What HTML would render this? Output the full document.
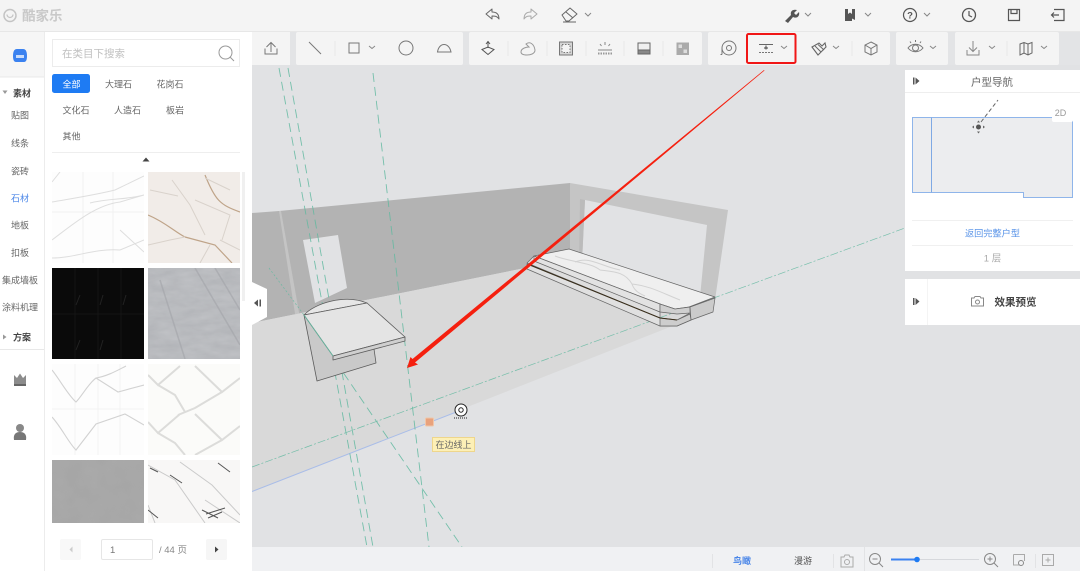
<!DOCTYPE html>
<html lang="zh"><head><meta charset="utf-8"><title>酷家乐</title>
<style>
html,body{margin:0;padding:0;width:1080px;height:571px;overflow:hidden;background:#e1e3e5}
svg{display:block;position:absolute;left:0;top:0;filter:blur(.35px)}
text{font-family:"Liberation Sans","Noto Sans CJK SC",sans-serif}
.i{fill:none;stroke:#777;stroke-width:1}
.c{fill:none;stroke:#888;stroke-width:1}
.m{font-size:9px;fill:#666;text-anchor:middle}
.t{font-size:9px;fill:#666;text-anchor:middle}
.s{stroke:#e8e8e8;stroke-width:1}
</style></head><body>
<svg width="1080" height="571" viewBox="0 0 1080 571" xmlns="http://www.w3.org/2000/svg">
<defs>
<filter id="n1" x="0" y="0" width="100%" height="100%"><feTurbulence type="fractalNoise" baseFrequency="0.05 0.14" numOctaves="3" seed="4"/><feColorMatrix values="0 0 0 0 .62  0 0 0 0 .63  0 0 0 0 .65  .9 0 0 0 -.1"/></filter>
<filter id="n2" x="0" y="0" width="100%" height="100%"><feTurbulence type="fractalNoise" baseFrequency="0.06" numOctaves="2" seed="9"/><feColorMatrix values="0 0 0 0 .55  0 0 0 0 .55  0 0 0 0 .55  .5 0 0 0 -.1"/></filter>
<clipPath id="c1"><rect x="52" y="172" width="92" height="91"/></clipPath>
<clipPath id="c2"><rect x="148" y="172" width="92" height="91"/></clipPath>
<clipPath id="c3"><rect x="52" y="268" width="92" height="91"/></clipPath>
<clipPath id="c4"><rect x="148" y="268" width="92" height="91"/></clipPath>
<clipPath id="c5"><rect x="52" y="364" width="92" height="91"/></clipPath>
<clipPath id="c6"><rect x="148" y="364" width="92" height="91"/></clipPath>
<clipPath id="c7"><rect x="52" y="460" width="92" height="63"/></clipPath>
<clipPath id="c8"><rect x="148" y="460" width="92" height="63"/></clipPath>
</defs>

<!-- viewport -->
<rect x="252" y="65" width="828" height="483" fill="#e1e2e4"/>
<!-- back wall -->
<polygon points="252,213 279,211 570,183 570,259 252,323" fill="#b3b3b3"/>
<polygon points="279,211 281,211 300,318 296,320" fill="#c4c4c4"/>
<polygon points="303,240 338,235 347,288 315,303" fill="#e1e2e4"/>
<!-- right wall -->
<polygon points="570,183 728,210 715,300 700,297 707,225 585,200 582,262 570,259" fill="#c5c5c5"/>
<polygon points="580,199 585,200 582,262 579,261" fill="#bbb"/>
<!-- floor -->
<polygon points="252,323 570,259 715,300 670,327 252,492" fill="#d9d9d9"/>
<line x1="252" y1="491.5" x2="455" y2="412.5" stroke="#a9bde8" stroke-width="1"/>

<!-- green guides -->
<g fill="none" stroke="#62b9a0" stroke-width=".9" opacity=".85">
<line x1="279" y1="68" x2="367" y2="547" stroke-dasharray="9 5"/>
<line x1="288" y1="68" x2="373" y2="547" stroke-dasharray="9 5"/>
<line x1="373" y1="73" x2="429" y2="547" stroke-dasharray="9 5"/>
<line x1="269" y1="268" x2="304" y2="315" stroke-dasharray="2 2" stroke-width=".7"/>
<line x1="304" y1="315" x2="462" y2="547" stroke-dasharray="9 5"/>
<line x1="252" y1="467" x2="905" y2="228" stroke-dasharray="8 2 2 2" stroke-width=".7"/>
</g>

<!-- left table -->
<g stroke="#5c5c5c" stroke-width=".8" stroke-linejoin="round">
<polygon points="304,315 317,381 376,363 374,349" fill="#c9c9c9"/>
<path d="M304,315C315,303 345,294 367,303Z" fill="#e6e6e6"/>
<polygon points="304,315 367,303 405,337 333,356" fill="#e4e4e4"/>
<polygon points="333,356 405,337 405,341 333,360" fill="#cfcfcf"/>
</g>
<line x1="304" y1="315" x2="333" y2="356" stroke="#62b9a0" stroke-width=".8"/>

<!-- counter -->
<g stroke="#666" stroke-width=".7" stroke-linejoin="round">
<polygon points="527,263 534,256 660,312 660,318" fill="#dedede"/>
<path d="M527,264L660,318L677,320L690,313L691,320L677,326L660,326L527,269Z" fill="#e0e0e0"/>
<path d="M534,256L569,249L715,297L689,307L675,309L660,304Z" fill="#efefef"/>
<path d="M534,256L660,304L660,312L534,261Z" fill="#e2e2e2"/>
<path d="M660,304L675,309L690,307L690,313L677,314L660,312Z" fill="#cfcfcf"/>
<polygon points="690,307 715,298 713,312 691,320" fill="#cbcbcb"/>
<path d="M660,318L677,320L690,314L691,320L677,326L660,326Z" fill="#cdcdcd"/>
</g>
<path d="M530,265L660,318L677,320" fill="none" stroke="#3a2f1c" stroke-width="1"/>
<g fill="none" stroke="#d2d2d2" stroke-width="1">
<path d="M555,256C570,262 590,262 600,270C615,272 625,272 632,284C650,286 660,292 680,300"/>
<path d="M575,262C590,256 600,266 620,270"/>
<path d="M632,284C634,290 638,293 645,296"/>
</g>

<!-- snap markers -->
<rect x="425.500" y="418" width="8" height="8" rx="1" fill="#e9a27c" stroke="#f0c6a8"/>
<g fill="#fff" stroke="#222" stroke-width="1"><circle cx="461" cy="410" r="6"/><circle cx="461" cy="410" r="2.200" fill="none"/></g>
<path d="M454,418H467" stroke="#222" stroke-dasharray="1 1"/>
<rect x="432.500" y="437.500" width="42" height="14" fill="#fdf0b6" stroke="#eed68c"/>
<text x="453.500" y="447.800" font-size="9" fill="#666" text-anchor="middle">在边线上</text>

<!-- red annotation arrow -->
<polygon points="764,70 764.500,70.500 415,362.500 418,364.500 407,368 410.500,357 412.500,359" fill="#f5200f"/>

<!-- toggle tab -->
<polygon points="252,282 267,289 267,317 252,325" fill="#fff"/>
<path d="M254,303L258,299.500V306.500Z" fill="#555"/><rect x="259.500" y="299.500" width="1.500" height="7" fill="#555"/>

<!-- top bar -->
<rect x="0" y="0" width="1080" height="31" fill="#f4f4f4"/>
<rect x="0" y="31" width="1080" height="1" fill="#e7e7e7"/>
<rect x="0" y="32" width="1080" height="33" fill="#e3e4e6"/>
<g fill="#f4f4f4">
<rect x="252" y="32" width="38" height="33"/>
<rect x="296" y="32" width="167" height="33" rx="2"/>
<rect x="469" y="32" width="233" height="33" rx="2"/>
<rect x="708" y="32" width="182" height="33" rx="2"/>
<rect x="896" y="32" width="52" height="33" rx="2"/>
<rect x="955" y="32" width="104" height="33" rx="2"/>
</g>
<circle cx="10" cy="15.500" r="6" fill="none" stroke="#c4c4c4" stroke-width="1.500"/>
<path d="M7,14.500a3,3 0 0 0 6,0" fill="none" stroke="#c4c4c4" stroke-width="1.200"/>
<text x="22" y="20.500" font-size="13.500" font-weight="700" fill="#c9c9c9">酷家乐</text>

<!-- top icons -->
<g class="i" stroke-linejoin="round">
<path d="M486,14L492,9V12C497,12 499,15 499,19C497,16 495,16 492,16V19Z" stroke="#666"/>
<path d="M537,14L531,9V12C526,12 524,15 524,19C526,16 528,16 531,16V19Z" stroke="#aaa"/>
<path d="M562,15L570,8L577,14L569,21H566Z" stroke="#666"/><path d="M566,12L573,18" stroke="#666"/><path d="M563,22H576" stroke="#666"/>
</g>
<g class="c">
<path d="M585,13l3,3l3,-3M805,13l3,3l3,-3M865,13l3,3l3,-3M924,13l3,3l3,-3"/>
<path d="M369,46l3,2.500l3,-2.500M781,46l3,2.500l3,-2.500M833,46l3,2.500l3,-2.500M930,46l3,2.500l3,-2.500M989,46l3,2.500l3,-2.500M1041,46l3,2.500l3,-2.500"/>
</g>
<path d="M785,21L791,15C790,11 793,9 797,10L794,13L796,15L799,12C800,16 797,19 793,17L788,23Z" fill="#555"/>
<path d="M845,9H855V20L852,18.500V21H845Z" fill="#555"/><path d="M848,9h4v5l-2,-1.500l-2,1.500z" fill="#f4f4f4"/>
<circle cx="910" cy="15" r="6.500" fill="none" stroke="#555" stroke-width="1.200"/>
<text x="910" y="18.500" font-size="9.500" font-weight="700" fill="#555" text-anchor="middle">?</text>
<circle cx="969" cy="15" r="6.500" fill="none" stroke="#555" stroke-width="1.300"/>
<path d="M969,11v4.500l3,1.500" fill="none" stroke="#555" stroke-width="1.200"/>
<path d="M1008.500,9.500H1019.500V20.500H1008.500Z M1011,9.500v4h6v-4" fill="none" stroke="#555" stroke-width="1.200"/>
<path d="M1054,9.500H1064V20.500H1054 M1059,15H1051.500M1054,12.500L1051.500,15L1054,17.500" fill="none" stroke="#555" stroke-width="1.200"/>

<!-- toolbar icons -->
<g class="i">
<path d="M265,48.500V54H277V48.500M271,52V43M266.500,47L271,42.500L275.500,47"/>
<path d="M309,42L321,54"/>
<rect x="349" y="43" width="10" height="10"/>
<circle cx="406" cy="48" r="7"/>
<path d="M437.500,52C439,42 449,42 451,52Z"/>
<path d="M488,41V48M486,44L488,41.500L490,44M482,49.500L488,47L494,49.500L488,54.500Z" stroke="#555"/>
<path d="M521,52C521,48 527,47 529,47L526,44C530,41 534,44 535,50C535,54 530,55 527,55C523,55 521,54 521,52Z" stroke="#999"/>
<rect x="559.500" y="42" width="13" height="13" fill="#d5d5d5" stroke="#777"/>
<rect x="562" y="44.500" width="8" height="8" fill="#f4f4f4" stroke-dasharray="1.500 1.500"/>
<path d="M598,50H612M605,42v3M600,44l1.500,2M610,44l-1.500,2" stroke="#888"/>
<path d="M598,53.500H612" stroke="#999" stroke-dasharray="1.500 1" stroke-width="2"/>
<rect x="638" y="43" width="12" height="11" stroke="#666" fill="#f0f0f0"/><rect x="638" y="50" width="12" height="4" fill="#888" stroke="#666"/>
<rect x="677" y="43" width="11.500" height="11.500" fill="#aaa" stroke="#aaa"/>
<rect x="678.500" y="44.500" width="3.500" height="3.500" fill="#ddd" stroke="none"/><rect x="683.500" y="49.500" width="3.500" height="3.500" fill="#ddd" stroke="none"/>
<circle cx="729" cy="48" r="7"/><circle cx="729" cy="48" r="2.500"/><path d="M722,54.500H720.500M722,48V54.500"/>
<path d="M759,44.500H773" stroke="#666"/><path d="M759,52.500H773" stroke="#777" stroke-dasharray="2 1"/><path d="M766,45.500V49.500M764,48H768" stroke="#444"/>
<path d="M812,47L819,43L822,46L825,43L826,47L823,50L818,55Z" stroke="#666" stroke-width="1.100"/><path d="M815,46L821,52M818,44.500L824,50" stroke="#666"/>
<path d="M871,42L877,45V52L871,55L865,52V45Z M871,48.500V55M865,45L871,48.500L877,45" stroke="#777"/>
<path d="M908,48C912,43 919,43 923,48C919,53 912,53 908,48Z"/><circle cx="915.500" cy="48" r="3"/><path d="M911,43l-1,-1.500M915.500,42v-2M920,43l1,-1.500"/>
<path d="M973,41V51M969,47.500L973,51.500L977,47.500M967,50V55H979V50" stroke="#888"/>
<path d="M1020,44L1024,42.500L1028,44L1032,42.500V53L1028,55L1024,53L1020,55Z M1024,42.500V53M1028,44V55" stroke="#666"/>
</g>
<g class="s">
<line x1="335" y1="41" x2="335" y2="56"/><line x1="508" y1="41" x2="508" y2="56"/><line x1="547" y1="41" x2="547" y2="56"/><line x1="586" y1="41" x2="586" y2="56"/><line x1="624" y1="41" x2="624" y2="56"/><line x1="663" y1="41" x2="663" y2="56"/><line x1="852" y1="41" x2="852" y2="56"/><line x1="1007" y1="41" x2="1007" y2="56"/>
</g>
<!-- red highlight -->
<rect x="747" y="34" width="48.500" height="29" rx="1.500" fill="none" stroke="#f01616" stroke-width="2"/>

<!-- left rail -->
<rect x="0" y="32" width="252" height="539" fill="#fff"/>
<rect x="0" y="32" width="44" height="45" fill="#f6f6f6"/>
<rect x="0" y="76.500" width="44" height="1" fill="#e8e8e8"/>
<rect x="44" y="32" width="1" height="539" fill="#ececec"/>
<path d="M13,56C13,52 14,49 17,49H23C26,49 27,52 27,56C27,60 26,62 24,62H16C14,62 13,60 13,56Z" fill="#3b82f0"/>
<rect x="16" y="55" width="8" height="3" fill="#c9dcfb"/>
<path d="M2.500,90.500h5l-2.500,3.500z" fill="#999"/>
<text x="22" y="96.300" font-size="9" font-weight="700" fill="#444" text-anchor="middle">素材</text>
<text class="m" x="20" y="118.300">贴图</text>
<text class="m" x="20" y="146.300">线条</text>
<text class="m" x="20" y="174.300">瓷砖</text>
<text class="m" x="20" y="201.300" style="fill:#4a86e8">石材</text>
<text class="m" x="20" y="228.300">地板</text>
<text class="m" x="20" y="255.800">扣板</text>
<text class="m" x="20" y="283.300">集成墙板</text>
<text class="m" x="20" y="310.300">涂料机理</text>
<path d="M3,334.500v5l3.500,-2.500z" fill="#999"/>
<text x="22" y="340.300" font-size="9" font-weight="700" fill="#444" text-anchor="middle">方案</text>
<rect x="0" y="349" width="44" height="1" fill="#e8e8e8"/>
<path d="M14,375L17,378L20,373.500L23,378L26,375V384H14Z" fill="#8c8c8c"/><rect x="14" y="384" width="12" height="2" fill="#666"/>
<circle cx="20" cy="428" r="4" fill="#888"/><path d="M14,440C13,434 16,432 20,432C24,432 27,434 26,440Z" fill="#777"/>

<!-- search -->
<rect x="52.500" y="39.500" width="187" height="27" fill="#fff" stroke="#ececec"/>
<text x="62" y="57" font-size="10.500" fill="#c0c0c0">在类目下搜索</text>
<circle cx="225.500" cy="52.500" r="6.500" fill="none" stroke="#999"/><path d="M230,57L234,61" stroke="#999"/>

<!-- tags -->
<rect x="52" y="74" width="38" height="19" rx="2.500" fill="#1e7bf3"/>
<text class="t" x="71.500" y="87.300" style="fill:#fff">全部</text>
<text class="t" x="118.500" y="87.300">大理石</text>
<text class="t" x="170" y="87.300">花岗石</text>
<text class="t" x="76" y="113.300">文化石</text>
<text class="t" x="127.500" y="113.300">人造石</text>
<text class="t" x="175" y="113.300">板岩</text>
<text class="t" x="71.500" y="139.300">其他</text>
<rect x="52" y="152" width="188" height="1" fill="#eee"/>
<path d="M146,157.500l3.500,4h-7z" fill="#444"/>

<!-- tiles -->
<rect x="242" y="172" width="3" height="129" fill="#f0f0f0"/>
<g clip-path="url(#c1)"><rect x="52" y="172" width="92" height="91" fill="#fdfdfd"/>
<path d="M52,212H144M83,172V263M113,172V263" stroke="#f1f1f1" stroke-width="1"/>
<path d="M52,202C75,198 95,195 115,190L144,176M52,240C72,225 95,205 120,202L144,195M90,203C110,198 125,200 144,195M52,258C75,258 95,248 120,250L144,240M120,230L144,252M60,172L52,182" fill="none" stroke="#dedede" stroke-width="1"/></g>
<g clip-path="url(#c2)"><rect x="148" y="172" width="92" height="91" fill="#f1ece8"/>
<path d="M148,215C165,222 175,232 185,237L215,245L232,263M205,175C215,200 220,205 240,212" fill="none" stroke="#bfa489" stroke-width="1.200"/>
<path d="M172,180L190,205L205,235M205,178L230,190M220,240L240,250M148,245L170,240L185,237M195,200L230,215L222,240M150,190L178,196M200,263L210,245" fill="none" stroke="#d9d2cb" stroke-width="1"/></g>
<g clip-path="url(#c3)"><rect x="52" y="268" width="92" height="91" fill="#0a0a0a"/>
<path d="M52,314H144M75,268V359M98,268V359M121,268V359" stroke="#141414" stroke-width="1"/>
<path d="M80,295L76,305M103,295L100,305M126,295L123,305M80,340L76,350M103,340L100,350" stroke="#222" stroke-width="1" fill="none"/></g>
<g clip-path="url(#c4)"><rect x="148" y="268" width="92" height="91" fill="#b2b4b8"/><rect x="148" y="268" width="92" height="91" filter="url(#n1)" opacity=".7"/>
<path d="M195,268L240,345M215,268L240,310M160,280L185,359" stroke="#a2a4a8" stroke-width="1.500" fill="none" opacity=".6"/></g>
<g clip-path="url(#c5)"><rect x="52" y="364" width="92" height="91" fill="#fdfdfd"/>
<path d="M52,409H144M75,364V455M98,364V455M120,364V455" stroke="#f2f2f2"/>
<path d="M52,370C60,380 68,395 76,402C82,396 88,384 96,378C108,376 118,370 126,366M96,378L118,392L144,385M52,417C62,428 68,442 76,450L96,424L125,414L144,425" fill="none" stroke="#d2d2d2" stroke-width="1.100"/></g>
<g clip-path="url(#c6)"><rect x="148" y="364" width="92" height="91" fill="#fbfbf9"/>
<path d="M148,375L158,385L180,366M158,385L175,395L185,412M195,366L222,392L240,378M222,392L195,408L178,415M148,422L158,433L180,414M158,433L175,443L185,455M195,414L222,440L240,426M222,440L195,455" fill="none" stroke="#dcdcda" stroke-width="2"/></g>
<g clip-path="url(#c7)"><rect x="52" y="460" width="92" height="63" fill="#a6a6a6"/><rect x="52" y="460" width="92" height="63" filter="url(#n2)" opacity=".4"/></g>
<g clip-path="url(#c8)"><rect x="148" y="460" width="92" height="63" fill="#f8f7f6"/>
<path d="M148,465L175,480L205,523M180,462L212,485L240,515M205,500L240,523M148,505L155,523" fill="none" stroke="#cacaca" stroke-width="1"/>
<path d="M150,468L158,472M218,463L230,472M170,475L182,483M148,510L158,518M202,510L218,518M206,514L225,508M208,518L222,512" fill="none" stroke="#555" stroke-width="1"/></g>

<!-- pagination -->
<rect x="60" y="539" width="21" height="21" rx="2" fill="#f8f8f8"/>
<path d="M72.500,546.500v6l-3,-3z" fill="#ccc"/>
<rect x="101.500" y="539.500" width="51" height="20" rx="1.500" fill="#fff" stroke="#e6e6e6"/>
<text x="110" y="553" font-size="9.500" fill="#777">1</text>
<text x="159" y="553" font-size="9.500" fill="#888">/ 44 页</text>
<rect x="206" y="539" width="21" height="21" rx="2" fill="#f6f6f6"/>
<path d="M215,546.500v6l3.500,-3z" fill="#444"/>

<!-- right nav panel -->
<rect x="905" y="70" width="175" height="201" fill="#fff"/>
<rect x="905" y="92" width="175" height="1" fill="#eee"/>
<rect x="913" y="77.500" width="1.500" height="7" fill="#555"/><path d="M915.500,77.500l4,3.500l-4,3.500z" fill="#555"/>
<text x="992" y="85.500" font-size="10.500" fill="#666" text-anchor="middle">户型导航</text>
<path d="M912.500,117.500H1072.500V197.500H1023.500V192.500H912.500Z" fill="#ecedef" stroke="#8fb5ea" stroke-width="1"/>
<line x1="931.500" y1="117.500" x2="931.500" y2="192.500" stroke="#7fa9e4"/>
<path d="M981,122L998,100" stroke="#666" stroke-dasharray="4 2.500"/>
<circle cx="978.500" cy="127" r="2.500" fill="#555"/>
<path d="M978.500,120.500l-1.500,2h3zM978.500,133.500l-1.500,-2h3zM972,127l2,-1.500v3zM985,127l-2,-1.500v3z" fill="#666"/>
<rect x="1052" y="101" width="21" height="21" rx="2" fill="#fff"/>
<text x="1060.500" y="116" font-size="9" fill="#999" text-anchor="middle">2D</text>
<rect x="912" y="220" width="161" height="1" fill="#f0f0f0"/>
<rect x="912" y="245" width="161" height="1" fill="#f0f0f0"/>
<text x="992.500" y="236.500" font-size="9.200" fill="#5a94e8" text-anchor="middle">返回完整户型</text>
<text x="992.500" y="261.500" font-size="9.500" fill="#aaa" text-anchor="middle">1 层</text>

<rect x="905" y="279" width="175" height="46" fill="#fff"/>
<rect x="927" y="279" width="1" height="46" fill="#f4f4f4"/>
<rect x="913" y="298" width="1.500" height="7" fill="#555"/><path d="M915.500,298l4,3.500l-4,3.500z" fill="#555"/>
<path d="M971.500,298H974L975,296.500H980L981,298H983.500V306H971.500Z" fill="none" stroke="#888"/><circle cx="977.500" cy="302" r="2" fill="none" stroke="#888"/>
<text x="1015.500" y="305.500" font-size="10.500" font-weight="700" fill="#444" text-anchor="middle">效果预览</text>

<!-- bottom bar -->
<rect x="252" y="547" width="828" height="24" fill="#f0f1f3"/>
<g class="s" style="stroke:#e2e3e5">
<line x1="712.500" y1="554" x2="712.500" y2="568"/><line x1="833.500" y1="554" x2="833.500" y2="568"/><line x1="864.500" y1="547" x2="864.500" y2="571"/><line x1="1035.500" y1="554" x2="1035.500" y2="568"/>
</g>
<text x="742" y="564" font-size="9" font-weight="700" fill="#4a86e8" text-anchor="middle">鸟瞰</text>
<text x="803" y="564" font-size="9" fill="#555" text-anchor="middle">漫游</text>
<path d="M841,557H844L845,555H849L850,557H853V567H841Z" fill="none" stroke="#aaa"/><circle cx="847" cy="562" r="2.500" fill="none" stroke="#aaa"/>
<g fill="none" stroke="#888">
<circle cx="875" cy="559" r="5.500"/><path d="M872.500,559H877.500M879,563L883,567"/>
<circle cx="990" cy="559" r="5.500"/><path d="M987.500,559H992.500M990,556.500V561.500M994,563L998,567"/>
<path d="M1013.500,554.500H1024.500V561M1020,565H1013.500V554.500" stroke="#aaa"/><circle cx="1021" cy="563" r="2.500"/>
<rect x="1042.500" y="554.500" width="11" height="11" stroke="#aaa"/><path d="M1048,557.500V562.500M1045.500,560H1050.500" stroke="#aaa"/>
</g>
<rect x="891" y="559" width="88" height="1" fill="#d6d8dc"/>
<rect x="891" y="558.500" width="26" height="2" fill="#3b82f0"/>
<circle cx="917" cy="559.500" r="2.800" fill="#1e7bf3"/>
</svg>
</body></html>
